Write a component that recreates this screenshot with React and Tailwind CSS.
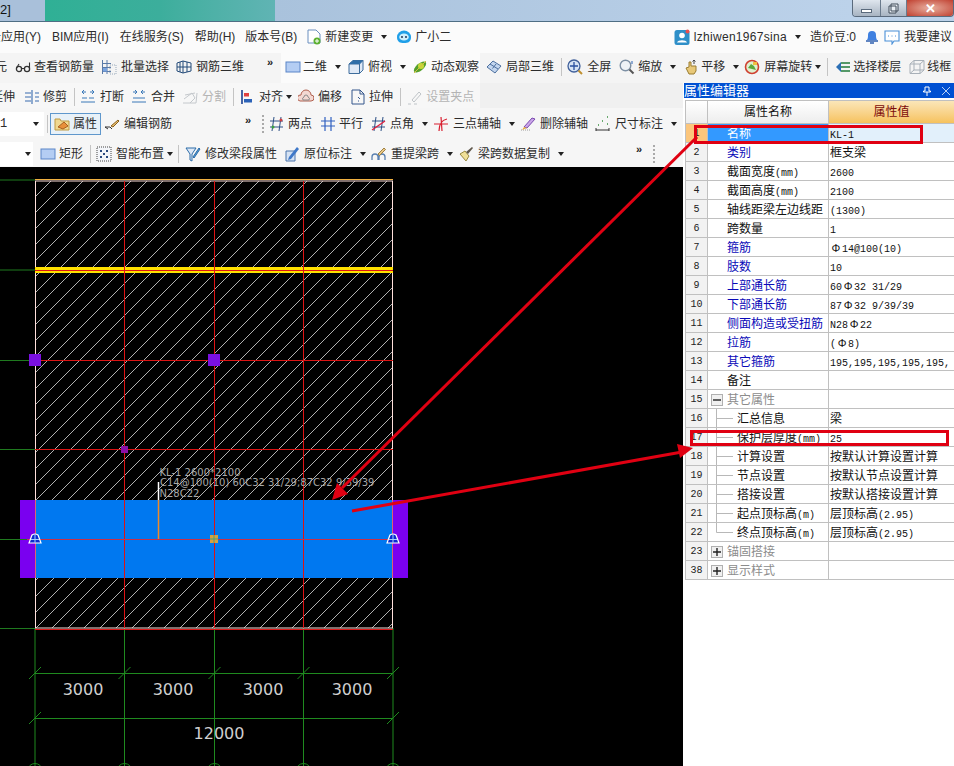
import React from "react";
import clsx from "clsx";

const Svg = ({ children }) => (
  <svg viewBox="0 0 16 16" className="w-4 h-4 block" fill="none">
    {children}
  </svg>
);

const ICONS = {
  glasses: (
    <>
      <circle cx="4" cy="10" r="2.6" stroke="#333" strokeWidth="1.3" />
      <circle cx="12" cy="10" r="2.6" stroke="#333" strokeWidth="1.3" />
      <path d="M6.5 9.5h3M1.5 9L4 5M14.5 9V3.5" stroke="#333" strokeWidth="1.1" />
    </>
  ),
  batch: (
    <>
      <path d="M1.5 1v14M6 1v14M1 4.5h9M1 8.5h9M1 12.5h9" stroke="#5a7aa8" />
      <rect x="2" y="9" width="4" height="3.5" fill="#7aa4e0" />
      <path d="M9 6h6v9H9z" stroke="#9ab" strokeDasharray="1 1" />
    </>
  ),
  rebar3d: <path d="M1 4l6-2v12l-6 -2zM7 2l8 2v8l-8 2M4 3v10M11 3v10M1 8h14" stroke="#234a78" />,
  rect2d: <rect x="1" y="3" width="14" height="10" fill="#b4cdf3" stroke="#5b85c8" />,
  cube: (
    <>
      <path d="M1 5l4-3.5h10V11l-3.5 3.5H1z" fill="#dfe9f6" stroke="#3e6d9c" />
      <path d="M1 5h10.5v9.5M11.5 5L15 1.5" stroke="#3e6d9c" />
      <path d="M1 5l4-3.5h10L11.5 5z" fill="#2f6ea8" />
    </>
  ),
  orbit: (
    <>
      <ellipse cx="8" cy="8" rx="7.5" ry="3.5" transform="rotate(-40 8 8)" fill="#55a02c" />
      <circle cx="9" cy="7" r="3" fill="#c8d83a" />
      <path d="M2 14L14 2" stroke="#d8c040" />
    </>
  ),
  local3d: (
    <>
      <path d="M1 8l6-6 8 5-6 7z" fill="#c2d5ee" stroke="#4c6f9e" />
      <path d="M4 5l8 5M6.5 9.5L10 5" stroke="#4c6f9e" />
    </>
  ),
  full: (
    <>
      <circle cx="7" cy="7" r="6" fill="#d5e3f5" stroke="#3f5f9a" strokeWidth="1.3" />
      <path d="M7 3v8M3 7h8" stroke="#2850a0" strokeWidth="1.3" />
      <path d="M11.5 11.5l3.5 3.5" stroke="#c09030" strokeWidth="2" />
    </>
  ),
  zoom: (
    <>
      <circle cx="6.5" cy="6.5" r="5.3" fill="#eef2f6" stroke="#7d90a4" strokeWidth="1.4" />
      <path d="M10.5 10.5l4 4" stroke="#555" strokeWidth="2" />
      <path d="M13 2v3" stroke="#2a60b0" />
    </>
  ),
  pan: (
    <>
      <path d="M3 9l3-1V3h2v4h5v5l-2 3H6z" fill="#e8c878" stroke="#9a7c30" />
      <path d="M11 1v4M9.5 2.5L11 1l1.5 1.5" stroke="#444" />
    </>
  ),
  rotate: (
    <>
      <circle cx="8" cy="8" r="6.5" fill="#dff0d0" stroke="#d04030" strokeWidth="1.6" />
      <path d="M4 9l3-4 3 2 2 4z" fill="#5ca83c" />
      <rect x="9" y="3" width="4" height="3" fill="#f0c040" />
    </>
  ),
  floors: (
    <>
      <path d="M6 4h9M4 8h11M6 12h9" stroke="#1f7a3a" strokeWidth="1.5" />
      <path d="M1 8l5-5v10z" fill="#2b6fb5" />
    </>
  ),
  wire: <path d="M1 5l4-3.5h10V11l-4 3.5H1zM1 5h10v9.5M11 5l4-3.5M5 1.5V11H15M5 11l-4 3.5" stroke="#a8b0b8" />,
  trim: <path d="M1 4h6M1 8h6M1 12h6M8 1v14M11 4h4M11 8h4M11 12h4" stroke="#3a6cb0" strokeWidth="1.1" />,
  cut: <path d="M1 13h14M2 9h5M9 9h5M6 3H2l2-2M2 3l2 2M10 3h4l-2-2M14 3l-2 2" stroke="#3a78b8" />,
  merge: <path d="M1 13h14M2 9h12M2 3h4l-2-2M6 3L4 5M14 3h-4l2-2M10 3l2 2" stroke="#3a78b8" />,
  split: <path d="M1 14h13L15 4M3 6l10-2M2 10l8-6 3 5-5 5" stroke="#c4c8cc" />,
  align: (
    <>
      <path d="M2 1v14" stroke="#1a3f90" strokeWidth="1.6" />
      <rect x="4" y="4" width="5" height="3.5" fill="#e04040" />
      <rect x="4" y="10" width="8" height="3.5" fill="#2b62b8" />
    </>
  ),
  offset: (
    <>
      <path d="M2 12a3 3 0 0 1 1-6 5 5 0 0 1 10 0 3 3 0 0 1 0 6z" fill="#f3d8d2" stroke="#b06050" />
      <path d="M5 11a2 2 0 0 1 1-3 2 2 0 0 1 4 0 2 2 0 0 1 1 3z" stroke="#8a8a8a" />
    </>
  ),
  stretch: <path d="M2 1h8l4 4v10H2zM10 1v4h4M8 8l2 2M8 12h1" stroke="#34568c" />,
  clamp: <path d="M2 15h3M8 15h3M6 11l7-8 2 2-7 8zM6 11l2 2" stroke="#bfc4c8" />,
  prop: (
    <>
      <path d="M1 3h5l1 2h8v9H1z" fill="#f0d890" stroke="#c09a40" />
      <path d="M4 11l6-5 4 4-5 3z" fill="#e8903a" stroke="#a86020" />
    </>
  ),
  edit: (
    <>
      <path d="M1 11h5l2 2M1 11l3 2" stroke="#333" />
      <path d="M7 10l7-6 1 1-6 6z" fill="#e8c070" stroke="#8a6020" />
    </>
  ),
  two: (
    <>
      <path d="M1 5h13M1 11h13M5 1l-2 14M12 1l-2 14" stroke="#2c4f85" />
      <circle cx="4" cy="11" r="1.5" fill="#3aa040" />
      <circle cx="12" cy="4" r="1.5" fill="#d04040" />
    </>
  ),
  parallel: <path d="M1 5h14M1 10h14M5 1v14M11 1v14" stroke="#3060c0" strokeWidth="1.2" />,
  angle: (
    <>
      <path d="M1 5h13M1 11h13M5 1l-2 14M12 1l-2 14" stroke="#2c4f85" />
      <path d="M1 14L14 5" stroke="#e02040" strokeWidth="1.4" />
    </>
  ),
  three: <path d="M1 8h14M6 15c0-8 3-11 8-12M8 1l1 14" stroke="#d82030" strokeWidth="1.2" />,
  del: (
    <>
      <path d="M1 14h9" stroke="#999" strokeDasharray="1 1" />
      <path d="M4 11l8-9 3 1-8 9z" fill="#caa6e8" stroke="#7a4ab0" />
      <path d="M2 14l2-3 3 1z" fill="#e8b040" />
    </>
  ),
  dim: (
    <>
      <path d="M1 12v3M14 12v3M1 14h13" stroke="#333" />
      <path d="M3 9h1M7 5h1M12 1h1M12 8h1" stroke="#3a9040" strokeWidth="1.5" />
    </>
  ),
  smart: (
    <>
      <rect x="1" y="1" width="14" height="14" fill="#f4f6fa" stroke="#444" strokeDasharray="1 1" />
      <path d="M4 4h2v2H4zM10 4h2v2h-2zM7 7h2v2H7zM4 10h2v2H4zM10 10h2v2h-2z" fill="#2a4a80" />
    </>
  ),
  modify: (
    <>
      <path d="M1 2h10L7 8v7l-2-1V8z" fill="#dde8f6" stroke="#2c6ca8" />
      <path d="M8 11l6-9 1 1-6 9z" fill="#56a0d8" stroke="#2c6ca8" />
    </>
  ),
  mark: (
    <>
      <path d="M2 5h9v10H2z" fill="#d5e2f3" stroke="#4a74ac" />
      <path d="M5 11L13 1l2 2-8 10-3 1z" fill="#3f78c8" />
    </>
  ),
  lift: (
    <>
      <path d="M1 14v-3a3 3 0 0 1 6 0v3M8 14v-3a3 3 0 0 1 6 0v3" stroke="#5a80b0" strokeWidth="1.3" />
      <path d="M7 8l6-6 1.5 1.5-6 6z" fill="#e8c888" stroke="#a08040" />
    </>
  ),
  copy: (
    <>
      <path d="M2 8l5-3 4 5-3 5z" fill="#f0e098" stroke="#9a8a40" />
      <path d="M8 6l6-5 1 1-5 6z" fill="#60584c" />
    </>
  ),
  newdoc: (
    <>
      <path d="M2 1h8l4 4v9H2z" fill="#fff" stroke="#6a8fbf" />
      <circle cx="11" cy="12" r="3.5" fill="#5cb030" />
      <path d="M11 10v4M9 12h4" stroke="#fff" />
    </>
  ),
  buddy: (
    <>
      <path d="M1 8a7 6.5 0 0 1 14 0c0 5-3 6-7 6S1 13 1 8z" fill="#1f9fe8" />
      <ellipse cx="8" cy="8" rx="4.8" ry="3.6" fill="#cdeefc" />
      <circle cx="6" cy="8" r="0.9" fill="#124" />
      <circle cx="10" cy="8" r="0.9" fill="#124" />
    </>
  ),
  user: (
    <>
      <rect x="0.5" y="1" width="15" height="15" rx="2.5" fill="#2f8fc8" />
      <circle cx="8" cy="6.5" r="2.8" fill="#fff" />
      <path d="M3 13.5c1-3 9-3 10 0z" fill="#fff" />
      <circle cx="13.5" cy="2.5" r="2" fill="#e85050" />
    </>
  ),
  bell: (
    <>
      <path d="M3 11c1-2 1-3 1-5a4 4 0 0 1 8 0c0 2 0 3 1 5z" fill="#3f80e0" />
      <path d="M2 12h12M6 14h4" stroke="#2f60b0" strokeWidth="1.5" />
    </>
  ),
  chat: (
    <>
      <path d="M1 2h14v10H10l-2 3v-3H1z" fill="#fff" stroke="#4a90d8" strokeWidth="1.1" />
      <path d="M4 7h1M7.5 7h1M11 7h1" stroke="#4a90d8" />
    </>
  ),
};

const Caret = ({ className }) => (
  <span
    className={clsx(
      "inline-block w-0 h-0 border-x-[3px] border-x-transparent border-t-[4px] border-t-[#222] shrink-0",
      className
    )}
  />
);

const Tool = ({ icon, label, caret, gray, className, iconGap = "mr-[4px]" }) => (
  <div className={clsx("flex items-center shrink-0", gray && "text-[#b4b4b4]", className)}>
    {icon && (
      <span className={clsx("shrink-0", iconGap)}>
        <Svg>{ICONS[icon]}</Svg>
      </span>
    )}
    <span>{label}</span>
    {caret && <Caret className="ml-[8px]" />}
  </div>
);

const Sep = ({ className }) => <span className={clsx("w-px h-[18px] bg-[#c4c4c4] shrink-0", className)} />;
const More = ({ className }) => (
  <span className={clsx("w-[6px] text-[11px] font-bold leading-none text-[#222] -mt-2 shrink-0", className)}>»</span>
);
const Grip = ({ className }) => (
  <span className={clsx("h-[18px] w-0 border-l-2 border-dotted border-[#aaa] shrink-0", className)} />
);

const PROPS = [
  { n: "1", name: "名称", val: "KL-1", sel: true },
  { n: "2", name: "类别", val: "框支梁", link: true },
  { n: "3", name: "截面宽度(mm)", val: "2600" },
  { n: "4", name: "截面高度(mm)", val: "2100" },
  { n: "5", name: "轴线距梁左边线距", val: "(1300)" },
  { n: "6", name: "跨数量", val: "1" },
  { n: "7", name: "箍筋", val: "Φ14@100(10)", link: true },
  { n: "8", name: "肢数", val: "10", link: true },
  { n: "9", name: "上部通长筋", val: "60Φ32 31/29", link: true },
  { n: "10", name: "下部通长筋", val: "87Φ32 9/39/39", link: true },
  { n: "11", name: "侧面构造或受扭筋", val: "N28Φ22", link: true },
  { n: "12", name: "拉筋", val: "(Φ8)", link: true },
  { n: "13", name: "其它箍筋", val: "195,195,195,195,195,", link: true },
  { n: "14", name: "备注", val: "" },
  { n: "15", name: "其它属性", val: "", group: "minus" },
  { n: "16", name: "汇总信息", val: "梁", child: true },
  { n: "17", name: "保护层厚度(mm)", val: "25", child: true },
  { n: "18", name: "计算设置", val: "按默认计算设置计算", child: true },
  { n: "19", name: "节点设置", val: "按默认节点设置计算", child: true },
  { n: "20", name: "搭接设置", val: "按默认搭接设置计算", child: true },
  { n: "21", name: "起点顶标高(m)", val: "层顶标高(2.95)", child: true },
  { n: "22", name: "终点顶标高(m)", val: "层顶标高(2.95)", child: true, last: true },
  { n: "23", name: "锚固搭接", val: "", group: "plus" },
  { n: "38", name: "显示样式", val: "", group: "plus" },
];

// ascii runs are the small fixed-width face of the original grid
const Mixed = ({ text }) =>
  text.split(/([\x21-\x7e ]+|Φ)/).map((part, i) => {
    if (part === "Φ") {
      return (
        <span key={i} className="inline-block w-[12px] text-center text-[11px]">
          Φ
        </span>
      );
    }
    return /^[\x21-\x7e ]+$/.test(part) ? (
      <span key={i} className="font-['Liberation_Mono',monospace] text-[10px] whitespace-pre">
        {part}
      </span>
    ) : (
      <span key={i}>{part}</span>
    );
  });

const TreeBox = ({ minus }) => (
  <span className="w-[12px] h-[12px] mx-[3px] border border-[#b0b0b0] bg-[#f0f0f0] flex items-center justify-center shrink-0">
    <svg viewBox="0 0 8 8" className="w-2 h-2">
      <path d={minus ? "M0 4h8" : "M0 4h8M4 0v8"} stroke="#222" strokeWidth="1.4" />
    </svg>
  </span>
);

const TreeLine = ({ last }) => (
  <svg viewBox="0 0 29 19" className="w-[29px] h-[19px] shrink-0 -mt-px">
    <path d={last ? "M8.5 0v9.5H25" : "M8.5 0v19M8.5 9.5H25"} stroke="#b8b8b8" fill="none" />
  </svg>
);

const PropRow = ({ row }) => (
  <>
    <div
      className={clsx(
        "h-[19px] pt-px border-b border-r border-[#c0c0c0] flex items-center justify-center font-['Liberation_Mono',monospace] text-[10px] text-[#222]",
        row.sel ? "bg-[#fcc67c]" : "bg-[#f2f2f2]"
      )}
    >
      {row.n}
    </div>
    <div
      className={clsx(
        "h-[19px] pt-px border-b border-r border-[#c0c0c0] flex items-center whitespace-nowrap overflow-hidden",
        row.sel && "bg-[#3399ff] text-white pl-[19px]",
        row.link && "text-[#0a0ab8] pl-[19px]",
        row.group && "text-[#8c8c8c]",
        !row.sel && !row.link && !row.group && !row.child && "text-[#111] pl-[19px]",
        row.child && "text-[#111]"
      )}
    >
      {row.group && <TreeBox minus={row.group === "minus"} />}
      {row.group && <span className="w-px" />}
      {row.child && <TreeLine last={row.last} />}
      <span>
        <Mixed text={row.name} />
      </span>
    </div>
    <div
      className={clsx(
        "h-[19px] pt-px border-b border-[#c0c0c0] flex items-center pl-[1px] whitespace-nowrap overflow-hidden text-[#111]",
        row.sel && "bg-[#e2f0fb]"
      )}
    >
      <span>
        <Mixed text={row.val} />
      </span>
    </div>
  </>
);

const PropPanel = () => (
  <div className="w-[271px] bg-white flex flex-col pl-px">
    <div className="h-[15px] bg-[#0050d2] text-white text-[13px] leading-[15px] flex items-center justify-between pr-[3px] overflow-hidden">
      <span>属性编辑器</span>
      <div className="flex items-center gap-[9px]">
        <svg viewBox="0 0 10 10" className="w-[10px] h-[10px]">
          <path d="M3 1h4v4h1.5v1H1.5V5H3zM5 6v4" stroke="#fff" fill="none" />
        </svg>
        <svg viewBox="0 0 10 10" className="w-[10px] h-[10px]">
          <path d="M1 1l8 8M9 1l-8 8" stroke="#b8d0f4" />
        </svg>
      </div>
    </div>
    <div className="ml-px mt-[2px] border-t border-l border-[#c0c0c0] grid grid-cols-[22px_121px_1fr]">
      <div className="h-[23px] border-r border-b border-[#c0c0c0] bg-gradient-to-b from-white to-[#ededed]" />
      <div className="h-[23px] border-r border-b border-[#c0c0c0] bg-gradient-to-b from-white to-[#ededed] flex items-center justify-center text-[#111]">
        属性名称
      </div>
      <div className="h-[23px] border-b border-[#c0c0c0] bg-gradient-to-b from-[#fbe6b8] to-[#f6c25c] flex items-center justify-center text-[#7c0a0a]">
        属性值
      </div>
      {PROPS.map((row) => (
        <PropRow key={row.n} row={row} />
      ))}
    </div>
  </div>
);

const HATCH_X = [35, 124.5, 214.5, 303.5, 393];
const DIM_X = [83, 173, 263, 352];

const Canvas = () => (
  <svg viewBox="0 167 683 599" className="w-[683px] h-[599px] block bg-black">
    <defs>
      <pattern id="hatch" patternUnits="userSpaceOnUse" width="16" height="16" x="35" y="181">
        <path d="M0 16L16 0M-2 2L2 -2M14 18L18 14" stroke="#c4c4c4" strokeWidth="0.9" />
      </pattern>
    </defs>
    {/* axis grid */}
    {[180, 270, 360.5, 449.5, 628.5].map((y) => (
      <path key={y} d={`M0 ${y}H35`} stroke="#1f7a1f" />
    ))}
    {HATCH_X.map((x) => (
      <g key={x}>
        <path d={`M${x} 628V766`} stroke="#1f8a1f" />
        <circle cx={x} cy="771" r="7.5" stroke="#1f8a1f" fill="none" />
        {x !== 35 && <path d={`M${x - 6} 679L${x + 6} 667`} stroke="#1f8a1f" />}
      </g>
    ))}
    <path d="M29 679L41 667M29 724L41 712M387 724L399 712" stroke="#1f8a1f" />
    <path d="M35 673.5H393M35 718.5H393" stroke="#1f8a1f" />
    {/* beam outline */}
    <rect x="35" y="181" width="358" height="447" fill="url(#hatch)" />
    <path d="M35 179.5H393" stroke="#f0b040" />
    <rect x="35.5" y="181" width="357" height="447" fill="none" stroke="#ffe0dc" />
    <path d="M35 629.5H393" stroke="#e01818" />
    <rect x="35" y="267" width="358" height="6" fill="#ffe000" />
    {/* selected span */}
    <rect x="35" y="500" width="358" height="78" fill="#0078f0" />
    <rect x="20" y="500" width="15" height="78" fill="#7a00f0" />
    <rect x="393" y="500" width="15" height="78" fill="#7a00f0" />
    {HATCH_X.slice(1, 4).map((x) => (
      <path key={x} d={`M${x} 181V628`} stroke="#dc1414" />
    ))}
    <path d="M35 270.5H393M35 360.5H393M35 449.5H393" stroke="#dc1414" />
    <path d="M0 539.5H27" stroke="#1f7a1f" />
    <path d="M27 539.5H393" stroke="#c83048" />
    <path d="M35.5 500V578M392.5 500V578" stroke="#e06070" />
    {/* grips */}
    <rect x="29" y="354" width="12" height="12" fill="#7a10e0" />
    <rect x="208" y="354" width="12" height="12" fill="#7a10e0" />
    <rect x="121" y="446" width="7" height="7" fill="#8a10a8" />
    <rect x="210" y="535" width="8" height="8" fill="#d8a040" />
    <path d="M214 535v8M210 539h8" stroke="#50a070" />
    {[35, 393].map((x) => (
      <g key={x}>
        <path
          d={`M${x - 6} 543L${x - 3} 535Q${x} 533 ${x + 3} 535L${x + 6} 543Z`}
          fill="#0a2ad0"
          stroke="#fff"
          strokeWidth="1.2"
        />
        <path d={`M${x} 534V543M${x - 4} 539.5H${x + 4}`} stroke="#9fd0ff" />
      </g>
    ))}
    <path d="M158.5 500V539" stroke="#f08a28" strokeWidth="1.5" />
    <path d="M158.5 482V500" stroke="#fff" strokeWidth="1.5" />
    <g className="font-['DejaVu_Sans',sans-serif]" fontSize="10" fill="#a8a8a8">
      <text x="159.5" y="476">KL-1 2600*2100</text>
      <text x="160" y="486">C14@100(10) 60C32 31/29;87C32 9/39/39</text>
      <text x="159.5" y="497">N28C22</text>
    </g>
    <g className="font-['DejaVu_Sans',sans-serif]" fontSize="16" fill="#cfcfcf" textAnchor="middle">
      {DIM_X.map((x) => (
        <text key={x} x={x} y="695">
          3000
        </text>
      ))}
      <text x="219" y="739">
        12000
      </text>
    </g>
  </svg>
);

// callout marks laid over the whole window
const Callouts = () => (
  <svg viewBox="0 0 954 766" className="absolute inset-0 w-[954px] h-[766px] pointer-events-none">
    <rect x="695.5" y="126.5" width="226" height="16" fill="none" stroke="#e00012" strokeWidth="3" />
    <rect x="691.5" y="431.5" width="256" height="13" fill="none" stroke="#e00012" strokeWidth="3" />
    <path d="M697 137L342 488" stroke="#e00012" strokeWidth="3" />
    <path d="M332 500L337 483L348 494Z" fill="#e00012" />
    <path d="M352 511L682 452" stroke="#e00012" strokeWidth="3" />
    <path d="M693 448L677 444L680 458Z" fill="#e00012" />
  </svg>
);

const WindowButtons = () => (
  <div className="flex h-[17px] rounded-b-[4px] border border-t-0 border-[#5a6a7c] overflow-hidden">
    <div className="w-[27px] bg-gradient-to-b from-[#dfe6ee] to-[#a8b4c2] flex items-center justify-center">
      <span className="w-[11px] h-[4px] mt-[5px] bg-white border border-[#5a6a7c]" />
    </div>
    <div className="w-[27px] border-x border-[#6a7a8c] bg-gradient-to-b from-[#dfe6ee] to-[#a8b4c2] flex items-center justify-center">
      <svg viewBox="0 0 11 11" className="w-[11px] h-[11px]">
        <path d="M3 1h7v7H3zM1 3h7v7H1z" fill="#e8eef4" stroke="#3e4a58" />
      </svg>
    </div>
    <div className="w-[46px] bg-[radial-gradient(ellipse_at_center,#e8b0a0,#c04030)] flex items-center justify-center text-white text-[13px] font-bold leading-none">
      ✕
    </div>
  </div>
);

export default function App() {
  return (
    <div className="relative w-[954px] h-[766px] overflow-hidden flex flex-col bg-[#f0f0f0] text-[12px] text-[#2c2c2c] font-['Liberation_Sans','Noto_Sans_CJK_SC',sans-serif]">
      {/* title bar */}
      <div className="h-[22px] flex shrink-0 border-b border-[#4f6e84] bg-[#b5cde6]">
        <div className="w-[45px] bg-[#a9c0da] text-[#111] text-[13px] leading-[20px]">2]</div>
        <div className="w-[230px] bg-gradient-to-r from-[#2fb095] via-[#3cae9c] to-[#60b4b4]" />
        <div className="flex-1 bg-gradient-to-r from-[#a9c2dc] to-[#bcd2ea]" />
        <div className="w-[102px] bg-[#bcd2ea]">
          <WindowButtons />
        </div>
      </div>

      {/* menu */}
      <div className="h-[31px] shrink-0 pb-[2px] bg-[#fbfbfb] flex items-center whitespace-nowrap">
        <span className="-ml-[11px]">云应用(Y)</span>
        <span className="ml-[11px]">BIM应用(I)</span>
        <span className="ml-[11px]">在线服务(S)</span>
        <span className="ml-[11px]">帮助(H)</span>
        <span className="ml-[10px]">版本号(B)</span>
        <Tool icon="newdoc" label="新建变更" caret className="ml-[9px]" iconGap="mr-[3px]" />
        <Tool icon="buddy" label="广小二" className="ml-[9px]" iconGap="mr-[3px]" />
        <div className="ml-auto flex items-center">
          <Tool icon="user" label="lzhiwen1967sina" caret className="tracking-[0.3px]" />
          <span className="ml-[9px]">造价豆:0</span>
          <span className="ml-[8px]">
            <Svg>{ICONS.bell}</Svg>
          </span>
          <Tool icon="chat" label="我要建议" className="ml-[4px]" />
          <span className="w-[2px]" />
        </div>
      </div>

      {/* main toolbar */}
      <div className="h-[30px] shrink-0 pb-[3px] bg-[linear-gradient(to_right,#f4f4f4_281px,#fbfbfb_281px,#fbfbfb_480px,#f4f4f4_480px)] flex items-center whitespace-nowrap overflow-hidden">
        <span className="-ml-[5px]">元</span>
        <Tool icon="glasses" label="查看钢筋量" className="ml-[8px]" iconGap="mr-[3px]" />
        <Tool icon="batch" label="批量选择" className="ml-[7px]" />
        <Tool icon="rebar3d" label="钢筋三维" className="ml-[7px]" />
        <More className="ml-[23px]" />
        <Tool icon="rect2d" label="二维" caret className="ml-[12px]" iconGap="mr-[2px]" />
        <Tool icon="cube" label="俯视" caret className="ml-[7px]" />
        <Tool icon="orbit" label="动态观察" className="ml-[6px]" iconGap="mr-[3px]" />
        <Tool icon="local3d" label="局部三维" className="ml-[7px]" />
        <Sep className="ml-[7px]" />
        <Tool icon="full" label="全屏" className="ml-[5px]" />
        <Tool icon="zoom" label="缩放" caret className="ml-[8px]" iconGap="mr-[3px]" />
        <Tool icon="pan" label="平移" caret className="ml-[7px]" iconGap="mr-[2px]" />
        <Tool icon="rotate" label="屏幕旋转" className="ml-[5px]" />
        <Caret className="ml-[3px]" />
        <Sep className="ml-[6px]" />
        <Tool icon="floors" label="选择楼层" className="ml-[7px]" iconGap="mr-[2px]" />
        <Tool icon="wire" label="线框" className="ml-[8px]" iconGap="mr-[2px]" />
      </div>

      <div className="flex-1 flex min-h-0">
        <div className="w-[683px] flex flex-col shrink-0">
          {/* edit toolbar */}
          <div className="h-[25px] shrink-0 flex">
            <div className="w-[480px] pt-[2px] bg-[#f7f7f7] flex items-center whitespace-nowrap overflow-hidden">
              <span className="-ml-[9px]">延伸</span>
              <Tool icon="trim" label="修剪" className="ml-[9px]" iconGap="mr-[3px]" />
              <Sep className="ml-[7px]" />
              <Tool icon="cut" label="打断" className="ml-[5px]" />
              <Tool icon="merge" label="合并" className="ml-[7px]" />
              <Tool icon="split" label="分割" gray className="ml-[7px]" />
              <Sep className="ml-[7px]" />
              <Tool icon="align" label="对齐" className="ml-[6px]" iconGap="mr-[3px]" />
              <Caret className="ml-[3px]" />
              <Tool icon="offset" label="偏移" className="ml-[6px]" />
              <Tool icon="stretch" label="拉伸" className="ml-[8px]" iconGap="mr-[3px]" />
              <Sep className="ml-[7px]" />
              <Tool icon="clamp" label="设置夹点" gray className="ml-[5px]" />
            </div>
          </div>

          {/* layer toolbar */}
          <div className="h-[30px] shrink-0 pt-[2px] bg-[#f6f6f6] flex items-center whitespace-nowrap overflow-hidden">
            <div className="w-[44px] h-[24px] bg-white flex items-center justify-between pr-[5px]">
              <span className="font-['Liberation_Mono',monospace]">1</span>
              <Caret />
            </div>
            <Sep className="ml-[3px]" />
            <div className="ml-[2px] w-[51px] h-[22px] flex items-center pl-[3px] bg-[#e8f1f8] border border-[#5f97cc]">
              <Tool icon="prop" label="属性" iconGap="mr-[3px]" />
            </div>
            <Tool icon="edit" label="编辑钢筋" className="ml-[3px]" />
            <More className="ml-[73px]" />
            <Grip className="ml-[11px]" />
            <Tool icon="two" label="两点" className="ml-[5px]" iconGap="mr-[3px]" />
            <Tool icon="parallel" label="平行" className="ml-[8px]" iconGap="mr-[3px]" />
            <Tool icon="angle" label="点角" caret className="ml-[8px]" iconGap="mr-[3px]" />
            <Tool icon="three" label="三点辅轴" caret className="ml-[5px]" />
            <Tool icon="del" label="删除辅轴" className="ml-[5px]" />
            <Tool icon="dim" label="尺寸标注" caret className="ml-[7px]" />
          </div>

          {/* beam toolbar */}
          <div className="h-[29px] shrink-0 pt-[2px] bg-[#f6f6f6] flex items-center whitespace-nowrap overflow-hidden">
            <div className="w-[33px] h-[24px] bg-white flex items-center justify-end pr-[2px]">
              <Caret />
            </div>
            <Tool icon="rect2d" label="矩形" className="ml-[7px]" iconGap="mr-[3px]" />
            <Sep className="ml-[7px]" />
            <Tool icon="smart" label="智能布置" className="ml-[5px]" />
            <Caret className="ml-[3px]" />
            <Sep className="ml-[5px]" />
            <Tool icon="modify" label="修改梁段属性" className="ml-[6px]" />
            <Tool icon="mark" label="原位标注" caret className="ml-[7px]" />
            <Tool icon="lift" label="重提梁跨" caret className="ml-[5px]" />
            <Tool icon="copy" label="梁跨数据复制" caret className="ml-[5px]" />
            <More className="ml-[72px]" />
            <Grip className="ml-[11px]" />
          </div>

          <Canvas />
        </div>
        <PropPanel />
      </div>

      <Callouts />
    </div>
  );
}
